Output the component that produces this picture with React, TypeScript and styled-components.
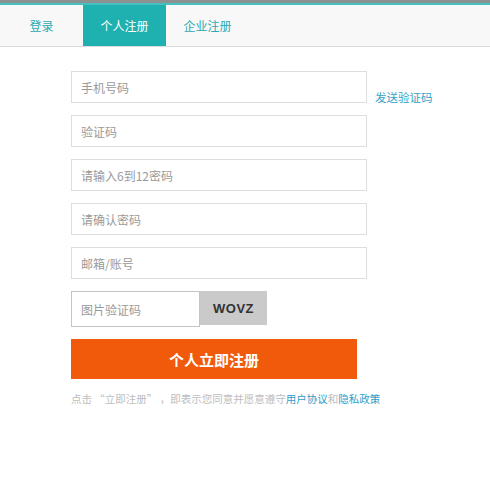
import React from "react";
import styled, { createGlobalStyle } from "styled-components";

const GlobalStyle = createGlobalStyle`
  html, body {
    margin: 0;
    padding: 0;
    background: #fff;
    font-family: "Noto Sans CJK SC", "Noto Sans", sans-serif;
  }
  * {
    box-sizing: border-box;
  }
`;

const TABS = ["登录", "个人注册", "企业注册"];

const FIELDS = [
  { placeholder: "手机号码", extra: "发送验证码" },
  { placeholder: "验证码" },
  { placeholder: "请输入6到12密码" },
  { placeholder: "请确认密码" },
  { placeholder: "邮箱/账号" },
];

const App = () => {
  return (
    <>
      <GlobalStyle />
      <Page>
        <TopStrip />
        <TabBar>
          {TABS.map((t, i) => (
            <Tab key={t} active={i === 1}>
              {t}
            </Tab>
          ))}
        </TabBar>

        <Form>
          {FIELDS.map((f) => (
            <FieldRow key={f.placeholder}>
              <Input type="text" placeholder={f.placeholder} />
              {f.extra && <SendLink href="#">{f.extra}</SendLink>}
            </FieldRow>
          ))}

          <CaptchaRow>
            <CaptchaInput type="text" placeholder="图片验证码" />
            <CaptchaImage>WOVZ</CaptchaImage>
          </CaptchaRow>

          <SubmitButton type="button">个人立即注册</SubmitButton>

          <Terms>
            点击 “立即注册” ，即表示您同意并愿意遵守
            <TermsLink href="#">用户协议</TermsLink>和
            <TermsLink href="#">隐私政策</TermsLink>
          </Terms>
        </Form>
      </Page>
    </>
  );
};

const Page = styled.div`
  width: 490px;
  min-height: 494px;
  background: #fff;
`;

const TopStrip = styled.div`
  height: 5px;
  background: #8b9292;
  border-bottom: 2px solid #45c0c0;
`;

const TabBar = styled.div`
  display: flex;
  height: 42px;
  background: #f8f8f8;
  border-bottom: 1px solid #dcdcdc;
`;

const Tab = styled.div<{ active?: boolean }>`
  width: 83px;
  display: flex;
  align-items: center;
  justify-content: center;
  font-size: 12px;
  color: ${({ active }) => (active ? "#fff" : "#2aa9b2")};
  background: ${({ active }) => (active ? "#1fb0b0" : "transparent")};
  cursor: pointer;
`;

const Form = styled.div`
  display: flex;
  flex-direction: column;
  gap: 12px;
  padding: 24px 0 0 71px;
`;

const FieldRow = styled.div`
  display: flex;
  align-items: flex-end;
  gap: 8px;
`;

const Input = styled.input`
  width: 296px;
  height: 32px;
  padding: 0 9px;
  border: 1px solid #dedede;
  outline: none;
  font-family: inherit;
  font-size: 12px;
  color: #333;
  &::placeholder {
    color: #9a9a9a;
  }
`;

const SendLink = styled.a`
  font-size: 11.5px;
  line-height: 14px;
  margin-bottom: -1px;
  color: #35a3c6;
  text-decoration: none;
`;

const CaptchaRow = styled.div`
  display: flex;
  align-items: flex-start;
`;

const CaptchaInput = styled(Input)`
  width: 129px;
  height: 36px;
  border-color: #c4c4c4;
`;

const CaptchaImage = styled.div`
  width: 67px;
  height: 34px;
  display: flex;
  align-items: center;
  justify-content: center;
  background: #cacaca;
  color: #333;
  font-family: "Liberation Sans", Arial, sans-serif;
  font-weight: bold;
  font-size: 13px;
  letter-spacing: 0.5px;
`;

const SubmitButton = styled.button`
  width: 286px;
  height: 40px;
  border: none;
  background: #f05a0a;
  color: #fff;
  font-family: inherit;
  font-size: 15px;
  font-weight: bold;
  cursor: pointer;
`;

const Terms = styled.p`
  margin: 0;
  font-size: 10.5px;
  line-height: 16px;
  color: #bdbdbd;
  white-space: nowrap;
`;

const TermsLink = styled.a`
  color: #2e9dc8;
  text-decoration: none;
`;

export default App;
